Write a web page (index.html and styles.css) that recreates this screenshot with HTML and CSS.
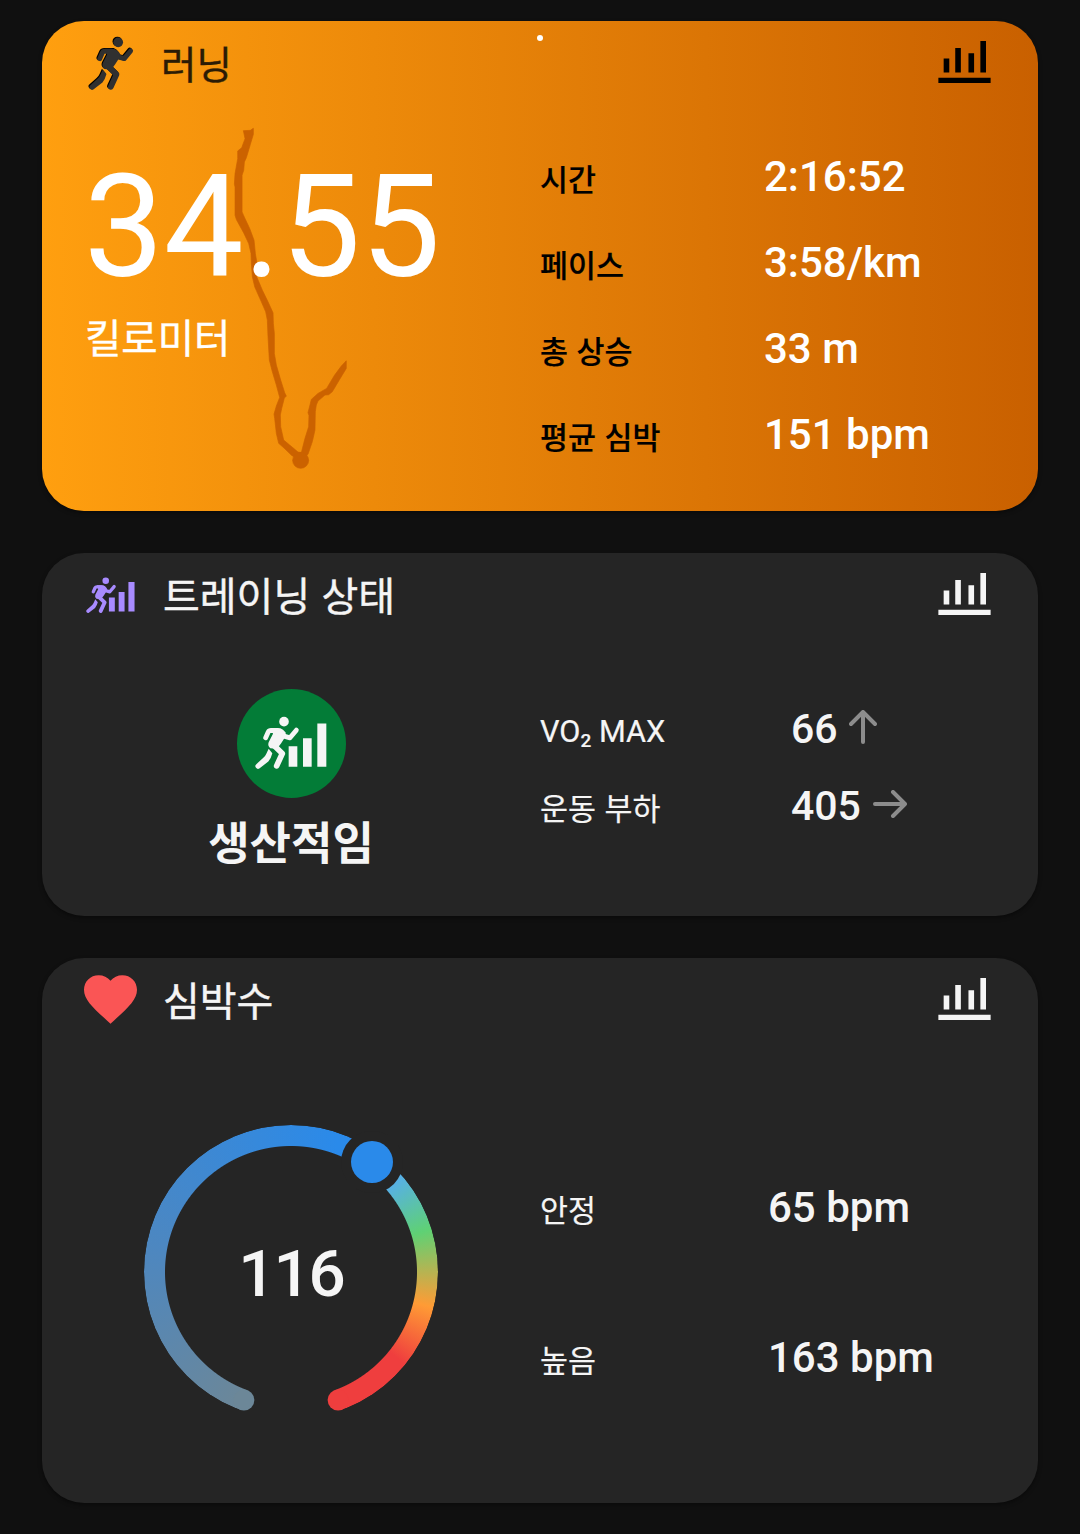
FILE: index.html
```html
<!DOCTYPE html>
<html lang="ko">
<head>
    <meta charset="UTF-8">
    <meta name="viewport" content="width=device-width, initial-scale=1.0">
    <title>러닝</title>
    <link rel="stylesheet" href="styles.css">
</head>
<body>
    <!-- Shared icons -->
    <svg class="icon-defs" aria-hidden="true">
        <symbol id="chart" viewBox="0 0 158 127">
            <path d="M16 53h17v42H16zM51 21h17v74H51zM91 37h17v58H91zM127 0h17v95h-17zM0 111h158v16H0z" fill="currentColor"/>
        </symbol>
        <symbol id="runner" viewBox="0 0 136 158">
            <g id="runner-shape">
                <circle cx="87" cy="16.500" r="14.500" fill="currentColor"/>
                <path d="M32 65L40 47Q42 43 48 43H68M77 49L87 60L105 65L124 42" fill="none" stroke="currentColor" stroke-width="14.500" stroke-linecap="round" stroke-linejoin="round"/>
                <path d="M48 36H76Q84 38 92 49L92 60L78 82L66 98L46 96Q37 89 41 78L54 53Z" fill="currentColor"/>
                <path d="M54 85L82 112L65 149" fill="none" stroke="currentColor" stroke-width="17" stroke-linecap="round" stroke-linejoin="round"/>
                <path d="M41 98L52 111Q48 127 40 136L14 156A7.500 7.500 0 0 1 4 144L25 125Q31 120 34 113Z" fill="currentColor"/>
            </g>
        </symbol>
        <symbol id="training" viewBox="0 0 216 158">
            <use href="#runner-shape"/>
            <path d="M101 90h26v62h-26zM144 66h26v86h-26zM187 22h27v130h-27z" fill="currentColor"/>
        </symbol>
    </svg>

    <main class="container">
        <section class="card card-running">
            <span class="page-dot"></span>
            <svg class="route" viewBox="460 20 345 1030">
                <path d="M491 31L512 30L521 24L521 42L512 72L500 112L494 125L492 150L487 165V275L495 293L510 325L523 360L527 400L532 430L531 470L548 510L565 545L580 578L581 610L584 640L584 700L590 735L603 780L615 818L620 828L614 834L606 865L602 885L603 920L612 960L630 975L655 996L665 998L676 955L687 920L688 886L685 878L691 855L695 838L715 820L741 805L765 765L785 738L800 722V745L780 778L758 815L747 824L736 825L715 843L710 855L707 875L706 930L698 965L685 1003L665 1020L637 1007L613 984L597 970L590 940L585 895L583 882L590 858L600 832L590 795L578 755L569 720L565 650L563 600L558 575L545 545L525 500L518 470L515 430L514 400L507 370L492 338L470 298L466 285V200L464 192L466 160L474 115V92L486 82L496 55Z"/>
                <circle cx="663" cy="1021" r="24"/>
            </svg>
            <header class="card-header">
                <span class="icon-slot">
                    <svg class="icon-run" viewBox="0 0 136 158">
                        <use href="#runner-shape" color="#000"/>
                        <use href="#runner-shape" color="#303030" transform="translate(2.500 2.500)"/>
                    </svg>
                </span>
                <h2>러닝</h2>
                <svg class="icon-chart"><use href="#chart"/></svg>
            </header>
            <div class="card-body">
                <div class="summary distance">
                    <div class="distance-value">34.55</div>
                    <div class="distance-unit">킬로미터</div>
                </div>
                <dl class="stats">
                    <div class="row"><dt>시간</dt><dd>2:16:52</dd></div>
                    <div class="row"><dt>페이스</dt><dd>3:58/km</dd></div>
                    <div class="row"><dt>총 상승</dt><dd>33 m</dd></div>
                    <div class="row"><dt>평균 심박</dt><dd>151 bpm</dd></div>
                </dl>
            </div>
        </section>

        <section class="card card-training">
            <header class="card-header">
                <span class="icon-slot"><svg class="icon-training"><use href="#training"/></svg></span>
                <h2>트레이닝 상태</h2>
                <svg class="icon-chart"><use href="#chart"/></svg>
            </header>
            <div class="card-body">
                <div class="summary status">
                    <div class="badge"><svg><use href="#training"/></svg></div>
                    <div class="status-text">생산적임</div>
                </div>
                <dl class="stats">
                    <div class="row">
                        <dt class="latin">VO<span class="sub">2</span> MAX</dt>
                        <dd>66
                            <svg class="arrow-up" viewBox="0 0 28 34"><path d="M14 32V2M2 14L14 2L26 14"/></svg>
                        </dd>
                    </div>
                    <div class="row">
                        <dt>운동 부하</dt>
                        <dd>405
                            <svg class="arrow-right" viewBox="0 0 34 28"><path d="M2 14H32M20 2L32 14L20 26"/></svg>
                        </dd>
                    </div>
                </dl>
            </div>
        </section>

        <section class="card card-heart">
            <header class="card-header">
                <span class="icon-slot">
                    <svg class="icon-heart" viewBox="0 0 159 146"><path d="M79.500 146L68 135C27 98 0 74 0 44C0 19 19 0 44 0C58 0 71 6 79.500 17C88 6 101 0 115 0C140 0 159 19 159 44C159 74 132 98 91 135Z"/></svg>
                </span>
                <h2>심박수</h2>
                <svg class="icon-chart"><use href="#chart"/></svg>
            </header>
            <div class="card-body">
                <div class="summary">
                    <div class="gauge">
                        <div class="gauge-ring"></div>
                        <svg class="gauge-marks" viewBox="0 0 294 294">
                            <circle cx="99.900" cy="275.100" r="10.500" fill="#6c8798"/>
                            <circle cx="194.100" cy="275.100" r="10.500" fill="#ef3e3e"/>
                            <circle cx="228" cy="37" r="31" fill="#252525"/>
                            <circle cx="228" cy="37" r="21" fill="#2a8aea"/>
                        </svg>
                        <span class="gauge-value">116</span>
                    </div>
                </div>
                <dl class="stats">
                    <div class="row"><dt>안정</dt><dd>65 bpm</dd></div>
                    <div class="row"><dt>높음</dt><dd>163 bpm</dd></div>
                </dl>
            </div>
        </section>
    </main>
</body>
</html>
```
FILE: styles.css
```css
* {
    box-sizing: border-box;
}

body {
    margin: 0;
    background-color: #101010;
    color: #f5f5f5;
    font-family: Roboto, 'Noto Sans CJK KR', sans-serif;
}

.icon-defs {
    display: none;
}

.container {
    display: flex;
    flex-direction: column;
    gap: 42px;
    padding: 21px 42px 31px;
}

.card {
    position: relative;
    border-radius: 42px;
    background-color: #252525;
    box-shadow: 0 2px 4px rgba(0, 0, 0, 0.4);
}

/* Header */
.card-header {
    display: flex;
    align-items: center;
    height: 82px;
    padding: 0 47px 0 42px;
}

.icon-slot {
    display: flex;
    align-items: center;
    width: 53px;
    margin-right: 26px;
}

.card-header h2 {
    flex: 1;
    margin: 0;
    font-family: 'Noto Sans CJK KR', sans-serif;
    font-size: 40px;
    font-weight: 400;
    line-height: 60px;
    -webkit-text-stroke: 0.4px;
}

.icon-chart {
    width: 53px;
    height: 42px;
}

/* Body */
.card-body {
    position: relative;
    display: grid;
    grid-template-columns: 1fr 1fr;
}

.summary {
    display: flex;
    flex-direction: column;
    align-items: center;
}

.stats {
    margin: 0;
}

.row {
    display: flex;
    align-items: center;
}

dt {
    width: 224px;
    padding-top: 2px;
    font-family: 'Noto Sans CJK KR', sans-serif;
    font-size: 30.4px;
    line-height: 44px;
    -webkit-text-stroke: 0.2px;
}

dd {
    display: flex;
    align-items: center;
    margin: 0;
    font-size: 42px;
    font-weight: 500;
    line-height: 50px;
}

/* Running */
.card-running {
    height: 490px;
    background: linear-gradient(to right, #ff9f0f, #c96000);
    color: #fff;
}

.card-running h2 {
    margin-left: -2px;
    color: #2b1b05;
    font-size: 38.5px;
}

.card-running .icon-chart {
    color: #000;
}

.icon-run {
    width: 46px;
    height: 53px;
    margin-left: 4px;
    overflow: visible;
}

.page-dot {
    position: absolute;
    top: 14px;
    left: 495px;
    width: 6px;
    height: 6px;
    border-radius: 50%;
    background-color: #fff;
}

.route {
    position: absolute;
    top: 106px;
    left: 191px;
    width: 115px;
    height: 343px;
    fill: #cb6200;
    stroke: #cb6200;
    stroke-width: 2;
}

.distance {
    align-items: flex-start;
    padding: 42px 0 0 42px;
}

.distance-value {
    font-size: 142px;
    line-height: 166px;
}

.distance-unit {
    margin-top: -5px;
    padding-left: 1px;
    font-family: 'Noto Sans CJK KR', sans-serif;
    font-size: 39.5px;
    line-height: 60px;
    -webkit-text-stroke: 0.4px;
}

.card-running .stats {
    padding-top: 31px;
}

.card-running .row {
    height: 86px;
}

.card-running dt {
    color: #000;
    font-weight: 500;
}

/* Training status */
.card-training {
    height: 363px;
}

.icon-training {
    width: 49px;
    height: 36px;
    margin-top: 1px;
    margin-left: 2px;
    color: #a88bff;
}

.badge {
    display: flex;
    align-items: center;
    justify-content: center;
    width: 109px;
    height: 109px;
    margin-top: 54px;
    border-radius: 50%;
    background-color: #037c37;
}

.badge svg {
    width: 72px;
    height: 53px;
    margin-top: -2px;
}

.status-text {
    font-family: 'Noto Sans CJK KR', sans-serif;
    font-size: 45px;
    font-weight: 700;
    line-height: 66px;
    margin-top: 10px;
}

.card-training .stats {
    padding-top: 55px;
}

.card-training .row {
    height: 77px;
}

.card-training dt {
    width: 251px;
}

.card-training dd {
    font-size: 41px;
}

.card-training .latin {
    padding-top: 11px;
    font-family: Roboto, sans-serif;
    font-size: 30.7px;
}

.sub {
    position: relative;
    top: 5px;
    font-size: 19px;
    font-weight: 500;
}

dd svg {
    margin-left: 11px;
    margin-bottom: 3px;
    fill: none;
    stroke: #8c8c8c;
    stroke-width: 4;
    stroke-linecap: round;
    stroke-linejoin: round;
}

.arrow-up {
    width: 28px;
    height: 34px;
}

.arrow-right {
    width: 34px;
    height: 28px;
    margin-left: 12px;
}

/* Heart rate */
.card-heart {
    height: 545px;
}

.icon-heart {
    width: 53px;
    height: 49px;
    fill: #fa5555;
}

.gauge {
    position: relative;
    display: flex;
    align-items: center;
    justify-content: center;
    width: 294px;
    height: 294px;
    margin-top: 85px;
}

.gauge-ring,
.gauge-marks {
    position: absolute;
    inset: 0;
}

.gauge-ring {
    border-radius: 50%;
    background: conic-gradient(from 180deg, transparent 20.2deg, #6c8798 20.2deg, #4d87c0 100deg, #2a8aea 200deg, #2a8aea 216deg, #57b0e6 229deg, #5fd174 253deg, #ff9b35 284deg, #ef3e3e 309deg, #ef3e3e 339.8deg, transparent 339.8deg);
    mask-image: radial-gradient(circle, transparent 125.5px, #000 126.5px);
}

.gauge-value {
    position: relative;
    padding-top: 3px;
    font-size: 65.5px;
    font-weight: 500;
    letter-spacing: -2px;
}

.card-heart .stats {
    padding-top: 93px;
}

.card-heart .row {
    height: 150px;
}

.card-heart dt {
    width: 228px;
}
```
